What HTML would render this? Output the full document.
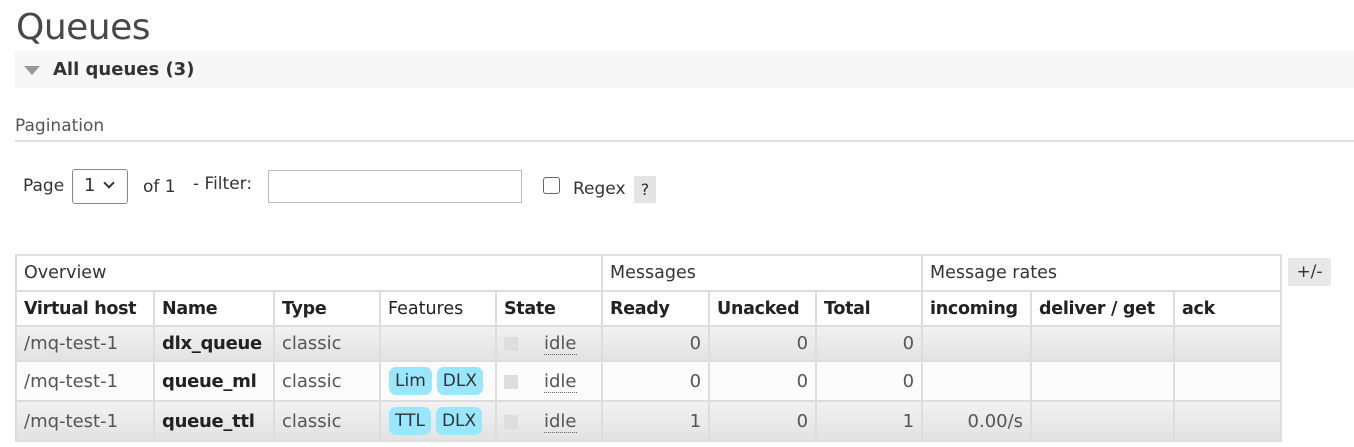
<!DOCTYPE html>
<html><head><meta charset="utf-8"><style>
body{margin:0;width:1354px;height:447px;background:#fff;font-family:"DejaVu Sans","Liberation Sans",sans-serif;color:#444;position:relative;overflow:hidden}
.a{position:absolute;white-space:nowrap}
h1{position:absolute;left:16px;top:7px;margin:0;font-weight:normal;font-size:36px;color:#484848;font-family:"DejaVu Sans",sans-serif;letter-spacing:-0.5px}
table{position:absolute;left:15px;top:254px;border-collapse:collapse;font-size:18px;table-layout:fixed;width:1265px}
td,th{border:2px solid #ddd;padding:0 7px;text-align:left;white-space:nowrap;overflow:hidden}
th{font-weight:bold;color:#222;font-size:17.5px;letter-spacing:-0.3px}
tr.h1 td{height:34px;font-weight:normal;color:#333;font-size:17.5px}
tr.h2 th{height:33px}
tr.h2 th.n{font-weight:normal;letter-spacing:0}
tr.r td{color:#555}
tr.o{background:linear-gradient(#f2f2f2,#e2e2e2)}
tr.e{background:#fbfbfb}
td.num{text-align:right}
td.f{padding-left:8px;padding-right:0}
b{color:#222;letter-spacing:-0.3px}
.bd{display:inline-block;background:#99e6ff;border-radius:7px;padding:2px 6px;margin-right:5px;color:#333;font-size:17px;line-height:24px}
.sq{display:inline-block;width:14px;height:14px;background:#ddd;margin-right:26px;vertical-align:middle}
.idle{border-bottom:1px dotted #666}
</style></head><body>
<h1>Queues</h1>
<div class="a" style="left:15px;top:51px;width:1339px;height:37px;background:#f7f7f7"></div>
<div class="a" style="left:24px;top:66px;width:0;height:0;border-left:8px solid transparent;border-right:8px solid transparent;border-top:9px solid #999"></div>
<div class="a" style="left:53px;top:59px;font-size:18px;font-weight:bold;color:#333">All queues (3)</div>
<div class="a" style="left:15px;top:116px;font-size:17px;color:#555">Pagination</div>
<div class="a" style="left:15px;top:140px;width:1339px;height:2px;background:#e0e0e0"></div>
<div class="a" style="left:23px;top:176px;font-size:17px;color:#333">Page</div>
<div class="a" style="left:72px;top:169px;width:56px;height:35px;border:1px solid #888;border-radius:3px;box-sizing:border-box"></div>
<div class="a" style="left:84px;top:175px;font-size:18px;color:#333">1</div>
<div class="a" style="left:105px;top:179px;width:6px;height:6px;border-right:2px solid #333;border-bottom:2px solid #333;transform:rotate(45deg)"></div>
<div class="a" style="left:143px;top:177px;font-size:17px;color:#333">of 1</div>
<div class="a" style="left:193px;top:174px;font-size:17px;color:#333">- Filter:</div>
<div class="a" style="left:268px;top:170px;width:254px;height:33px;border:1px solid #bbb;box-sizing:border-box"></div>
<div class="a" style="left:543px;top:177px;width:17px;height:17px;border:1px solid #666;border-radius:3px;box-sizing:border-box"></div>
<div class="a" style="left:573px;top:179px;font-size:17px;color:#333">Regex</div>
<div class="a" style="left:634px;top:176px;width:22px;height:27px;background:#e4e4e4;font-size:16px;text-align:center;line-height:27px;color:#333">?</div>
<div class="a" style="left:1288px;top:258px;width:43px;height:28px;background:#e8e8e8;font-size:17px;text-align:center;line-height:28px;color:#333">+/-</div>
<table>
<colgroup><col style="width:138px"><col style="width:120px"><col style="width:106px"><col style="width:116px"><col style="width:106px"><col style="width:107px"><col style="width:107px"><col style="width:106px"><col style="width:109px"><col style="width:143px"><col style="width:107px"></colgroup>
<tr class="h1"><td colspan="5">Overview</td><td colspan="3">Messages</td><td colspan="3">Message rates</td></tr>
<tr class="h2"><th>Virtual host</th><th>Name</th><th>Type</th><th class="n">Features</th><th>State</th><th>Ready</th><th>Unacked</th><th>Total</th><th>incoming</th><th>deliver / get</th><th>ack</th></tr>
<tr class="r o" style="height:35px"><td>/mq-test-1</td><td><b>dlx_queue</b></td><td>classic</td><td class="f"></td><td><span class="sq"></span><span class="idle">idle</span></td><td class="num">0</td><td class="num">0</td><td class="num">0</td><td></td><td></td><td></td></tr>
<tr class="r e" style="height:40px"><td>/mq-test-1</td><td><b>queue_ml</b></td><td>classic</td><td class="f"><span class="bd">Lim</span><span class="bd">DLX</span></td><td><span class="sq"></span><span class="idle">idle</span></td><td class="num">0</td><td class="num">0</td><td class="num">0</td><td></td><td></td><td></td></tr>
<tr class="r o" style="height:40px"><td>/mq-test-1</td><td><b>queue_ttl</b></td><td>classic</td><td class="f"><span class="bd">TTL</span><span class="bd">DLX</span></td><td><span class="sq"></span><span class="idle">idle</span></td><td class="num">1</td><td class="num">0</td><td class="num">1</td><td class="num">0.00/s</td><td></td><td></td></tr>
</table>
</body></html>
